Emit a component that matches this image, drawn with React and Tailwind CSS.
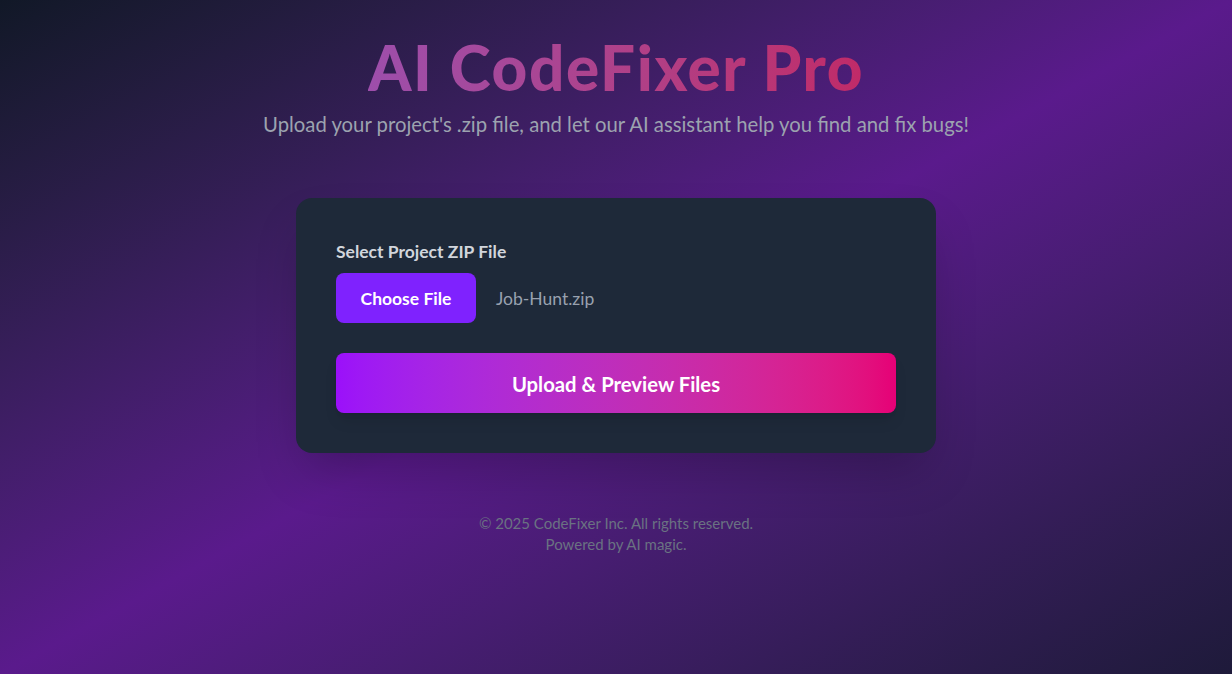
import React from "react";

export default function App() {
  return (
    <div
      className="min-h-screen w-full bg-gradient-to-br from-[#111827] via-[#5a1a8c] to-[#1e1a3a] flex flex-col items-center"
      style={{ fontFamily: "Lato, 'Noto Sans', sans-serif" }}
    >
      <header className="pt-[30px] flex flex-col items-center">
        <h1 className="text-[62px] leading-[74px] font-black tracking-[1.6px] bg-gradient-to-r from-[#9d4eab] to-[#c02a68] bg-clip-text text-transparent">
          AI CodeFixer Pro
        </h1>
        <p className="mt-[6px] text-[20.3px] leading-[28px] text-[#9ca3af]">
          Upload your project's .zip file, and let our AI assistant help you find and fix bugs!
        </p>
      </header>

      <main className="mt-[60px] w-[640px] bg-[#1e2939] rounded-2xl p-10 shadow-2xl">
        <label className="block text-[17.5px] leading-[24px] font-bold text-[#d1d5dc] mt-[2px]">
          Select Project ZIP File
        </label>
        <div className="mt-[9px] flex items-center">
          <button className="w-[140px] h-[50px] rounded-lg bg-[#7f22fe] text-white font-bold text-[17.5px] pt-[2px]">
            Choose File
          </button>
          <span className="ml-5 text-[17.5px] text-[#99a1af] pt-[2px]">Job-Hunt.zip</span>
        </div>
        <button className="mt-[30px] w-full h-[60px] rounded-lg bg-gradient-to-r from-[#9b10fa] to-[#e60076] text-white font-bold text-[20.3px] pt-[2px] shadow-lg">
          Upload &amp; Preview Files
        </button>
      </main>

      <footer className="mt-[60px] text-center text-[15px] leading-[21px] text-[#6a7282]">
        <p>© 2025 CodeFixer Inc. All rights reserved.</p>
        <p>Powered by AI magic.</p>
      </footer>
    </div>
  );
}
